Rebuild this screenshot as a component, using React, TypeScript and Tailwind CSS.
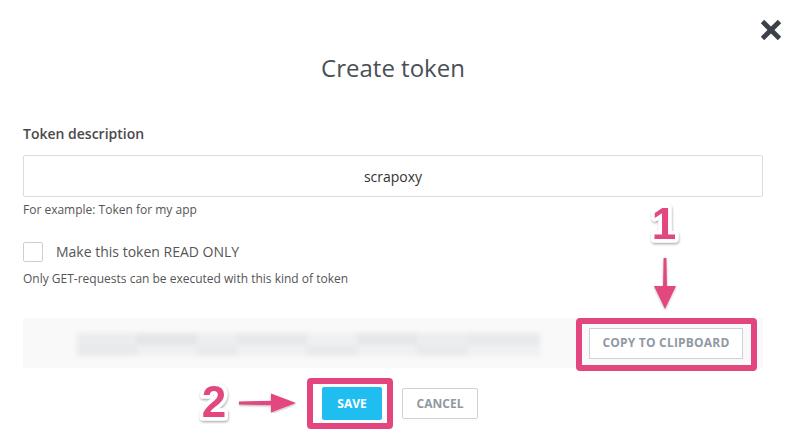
import { X } from 'lucide-react'

const PINK = '#e3467f'

function StepNumber({ n }: { n: string }) {
  return (
    <svg width="60" height="60" viewBox="0 0 60 60" className="block overflow-visible">
      <defs>
        <filter id={`sh${n}`} x="-20%" y="-20%" width="140%" height="140%">
          <feDropShadow dx="0.5" dy="1.5" stdDeviation="1" floodColor="#000" floodOpacity="0.35" />
        </filter>
      </defs>
      <text
        x="30"
        y="48"
        textAnchor="middle"
        fontFamily="'Liberation Sans', Arial, sans-serif"
        fontWeight="700"
        fontSize="44"
        fill={PINK}
        stroke="#fff"
        strokeWidth="7"
        strokeLinejoin="round"
        paintOrder="stroke"
        filter={`url(#sh${n})`}
      >
        {n}
      </text>
    </svg>
  )
}

function ArrowDown() {
  return (
    <svg width="28" height="56" viewBox="0 0 28 56" className="block">
      <defs>
        <filter id="ad" x="-30%" y="-10%" width="160%" height="130%">
          <feDropShadow dx="0" dy="1" stdDeviation="0.8" floodColor="#000" floodOpacity="0.3" />
        </filter>
      </defs>
      <g filter="url(#ad)" fill={PINK}>
        <path d="M12.6 2 L15.4 2 L16 34 L12 34 Z" />
        <path d="M3 30 L25 30 L14 53 Z" />
      </g>
    </svg>
  )
}

function ArrowRight() {
  return (
    <svg width="62" height="20" viewBox="0 0 62 20" className="block">
      <defs>
        <filter id="ar" x="-10%" y="-30%" width="120%" height="170%">
          <feDropShadow dx="0" dy="1" stdDeviation="0.8" floodColor="#000" floodOpacity="0.3" />
        </filter>
      </defs>
      <g filter="url(#ar)" fill={PINK}>
        <path d="M2 8.6 L36 7.8 L36 12.2 L2 11.4 Z" />
        <path d="M34 0.5 L59 10 L34 19.5 Z" />
      </g>
    </svg>
  )
}

const TOKEN_BLOCKS = [
  [60, '#ebecee', '#e8eaec'], [60, '#e4e6e8', '#eff0f2'], [40, '#eceef0', '#e8eaec'], [70, '#e6e8ea', '#eff0f2'],
  [50, '#eef0f1', '#e8eaec'], [60, '#e5e7e9', '#eff0f2'], [50, '#ebedee', '#e8eaec'], [73, '#e7e9eb', '#eff0f2'],
] as const

function BlurredToken() {
  return (
    <div className="flex h-[23px] w-[463px] flex-col blur-[2px]">
      <div className="flex h-[12px]">
        {TOKEN_BLOCKS.map(([w, c], i) => (
          <div key={i} style={{ width: w, backgroundColor: c }} />
        ))}
      </div>
      <div className="flex h-[11px]">
        {TOKEN_BLOCKS.map(([w, , c], i) => (
          <div key={i} style={{ width: w, backgroundColor: c }} />
        ))}
      </div>
    </div>
  )
}

export default function App() {
  return (
    <div className="relative h-[446px] w-[805px] overflow-hidden bg-white font-['Open_Sans',sans-serif]">
      {/* close */}
      <button className="absolute left-[754px] top-[13px] text-[#3c4049]">
        <X size={34} strokeWidth={3.4} strokeLinecap="butt" />
      </button>

      <div className="ml-[23px] w-[740px]">
        <h1 className="mt-[52px] h-8 text-center text-[24px] leading-8 font-normal text-[#4a4f57]">
          Create token
        </h1>

        <label className="mt-[40px] block text-[14px] leading-5 font-semibold text-[#4a4a4a]">
          Token description
        </label>
        <div className="mt-[11px] flex h-[42px] w-[740px] items-center justify-center rounded-[2px] border border-[#dcdcdc] text-[14px] text-[#333]">
          scrapoxy
        </div>
        <p className="mt-[5px] text-[12px] leading-4 text-[#555]">For example: Token for my app</p>

        <div className="mt-[24px] flex items-center">
          <span className="h-[20px] w-[20px] rounded-[2px] border border-[#cfcfcf] bg-white" />
          <span className="ml-[13px] text-[14px] leading-5 text-[#555]">Make this token READ ONLY</span>
        </div>
        <p className="mt-[9px] text-[12px] leading-4 text-[#555]">
          Only GET-requests can be executed with this kind of token
        </p>

        {/* token bar */}
        <div className="mt-[31px] flex h-[50px] w-[740px] items-center bg-[#f9f9f9]">
          <div className="ml-[54px] pt-[2px]">
            <BlurredToken />
          </div>
          <div className="relative ml-[49px]">
            <button className="h-[31px] w-[154px] border border-[#cfd2d5] bg-white text-[12px] font-bold tracking-[0.2px] text-[#8f99a3]">
              COPY TO CLIPBOARD
            </button>
            <span
              className="pointer-events-none absolute -left-[13px] -right-[14px] -top-[10px] -bottom-[12px] rounded-[4px] border-[6px]"
              style={{ borderColor: PINK }}
            />
            <div className="absolute -top-[137px] left-[45px]">
              <StepNumber n="1" />
            </div>
            <div className="absolute -top-[72px] left-[62px]">
              <ArrowDown />
            </div>
          </div>
        </div>

        {/* actions */}
        <div className="mt-[19px] flex items-start pl-[299px]">
          <div className="relative">
            <button className="h-[33px] w-[60px] rounded-[2px] bg-[#1fbdf0] text-[12px] font-bold text-white">
              SAVE
            </button>
            <span
              className="pointer-events-none absolute -left-[15px] -right-[11px] -top-[9px] -bottom-[9px] rounded-[4px] border-[6px]"
              style={{ borderColor: PINK }}
            />
            <div className="absolute -left-[138px] -top-[18px]">
              <StepNumber n="2" />
            </div>
            <div className="absolute -left-[85px] top-[6px]">
              <ArrowRight />
            </div>
          </div>
          <button className="ml-[20px] mt-[1px] h-[31px] w-[76px] rounded-[2px] border border-[#cfd2d5] bg-white text-[12px] font-bold text-[#8f99a3]">
            CANCEL
          </button>
        </div>
      </div>
    </div>
  )
}
